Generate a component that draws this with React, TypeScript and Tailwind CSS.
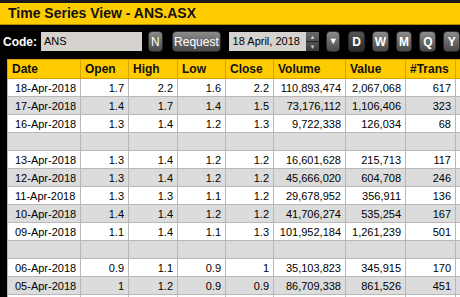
import React from "react";

type Row = string[] | null;

const rows: Row[] = [
  ["18-Apr-2018", "1.7", "2.2", "1.6", "2.2", "110,893,474", "2,067,068", "617"],
  ["17-Apr-2018", "1.4", "1.7", "1.4", "1.5", "73,176,112", "1,106,406", "323"],
  ["16-Apr-2018", "1.3", "1.4", "1.2", "1.3", "9,722,338", "126,034", "68"],
  null,
  ["13-Apr-2018", "1.3", "1.4", "1.2", "1.2", "16,601,628", "215,713", "117"],
  ["12-Apr-2018", "1.3", "1.4", "1.2", "1.2", "45,666,020", "604,708", "246"],
  ["11-Apr-2018", "1.3", "1.3", "1.1", "1.2", "29,678,952", "356,911", "136"],
  ["10-Apr-2018", "1.4", "1.4", "1.2", "1.2", "41,706,274", "535,254", "167"],
  ["09-Apr-2018", "1.1", "1.4", "1.1", "1.3", "101,952,184", "1,261,239", "501"],
  null,
  ["06-Apr-2018", "0.9", "1.1", "0.9", "1", "35,103,823", "345,915", "170"],
  ["05-Apr-2018", "1", "1.2", "0.9", "0.9", "86,709,338", "861,526", "451"],
  null,
];

const headers = ["Date", "Open", "High", "Low", "Close", "Volume", "Value", "#Trans", ""];
const widths = ["w-[73px]", "w-[48px]", "w-[49px]", "w-[48px]", "w-[48px]", "w-[72px]", "w-[60px]", "w-[50px]", "w-[40px]"];

function DarkButton({ label, active, className }: { label: string; active?: boolean; className?: string }) {
  return (
    <div
      className={`flex h-[21px] items-center justify-center rounded-[4px] border border-[#2a2a2a] text-white ${
        active ? "bg-gradient-to-b from-[#555] to-[#2a2a2a]" : "bg-gradient-to-b from-[#8c8c8c] to-[#4a4a4a]"
      } ${className ?? ""}`}
    >
      {label}
    </div>
  );
}

export default function App() {
  return (
    <div
      className="h-[297px] w-[460px] overflow-hidden bg-black"
      style={{ fontFamily: "'Liberation Sans', Arial, sans-serif" }}
    >
      <div className="h-[3px] bg-[#1a1a1a]" />
      <div className="flex h-[22px] items-center border-b border-[#b08a00] bg-[#ffcc00] pl-[8px]">
        <span className="whitespace-nowrap text-[14px] font-bold text-[#111]">Time Series View - ANS.ASX</span>
      </div>

      <div className="flex h-[33px] items-center pl-[3px]">
        <span className="mr-[4px] text-[12px] font-bold text-white">Code:</span>
        <div className="flex h-[19px] w-[102px] items-center bg-[#d6d3ce] pl-[3px] text-[11px] text-black">ANS</div>
        <DarkButton label="N" className="ml-[6px] w-[16px] text-[12px]" />
        <DarkButton label="Request" className="ml-[9px] w-[49px] text-[12px]" />
        <div className="ml-[8px] flex h-[19px] w-[78px] items-center whitespace-nowrap bg-[#d6d3ce] pl-[4px] text-[11px] text-black">
          18 April, 2018
        </div>
        <div className="flex h-[19px] w-[14px] flex-col bg-gradient-to-b from-[#6a6a6a] to-[#3a3a3a]">
          <div className="flex flex-1 items-center justify-center text-[6px] leading-none text-[#ccc]">▲</div>
          <div className="flex flex-1 items-center justify-center border-t border-[#222] text-[6px] leading-none text-[#ccc]">▼</div>
        </div>
        <DarkButton label="▼" className="ml-[7px] w-[14px] text-[9px]" />
        <DarkButton label="D" active className="ml-[8px] w-[17px] text-[12px] font-bold" />
        <DarkButton label="W" className="ml-[7px] w-[17px] text-[12px] font-bold" />
        <DarkButton label="M" className="ml-[7px] w-[17px] text-[12px] font-bold" />
        <DarkButton label="Q" className="ml-[7px] w-[17px] text-[12px] font-bold" />
        <DarkButton label="Y" className="ml-[7px] w-[17px] text-[12px] font-bold" />
      </div>

      <div className="mt-[1px] pl-[7px]">
        <table className="w-[488px] table-fixed border-collapse">
          <thead>
            <tr className="h-[19px] bg-[#ffcc00]">
              {headers.map((h, i) => (
                <th
                  key={i}
                  className={`${widths[i]} whitespace-nowrap border border-[#d9a400] px-[4px] text-left text-[12px] font-bold leading-[16px] text-[#111]`}
                >
                  {h}
                </th>
              ))}
            </tr>
          </thead>
          <tbody>
            {rows.map((r, ri) => {
              const cells = r ?? ["", "", "", "", "", "", "", ""];
              const gray = ri % 2 === 1;
              return (
                <tr key={ri} className={`h-[18px] ${gray ? "bg-[#dcdcdc]" : "bg-white"}`}>
                  {cells.map((c, ci) => (
                    <td
                      key={ci}
                      className={`overflow-hidden whitespace-nowrap border border-[#b8b8b8] text-[11px] leading-[16px] text-black ${
                        ci === 0 ? "pl-[7px] text-left" : "pr-[4px] text-right"
                      }`}
                    >
                      {c}
                    </td>
                  ))}
                  <td className="border border-[#b8b8b8]" />
                </tr>
              );
            })}
          </tbody>
        </table>
      </div>
    </div>
  );
}
